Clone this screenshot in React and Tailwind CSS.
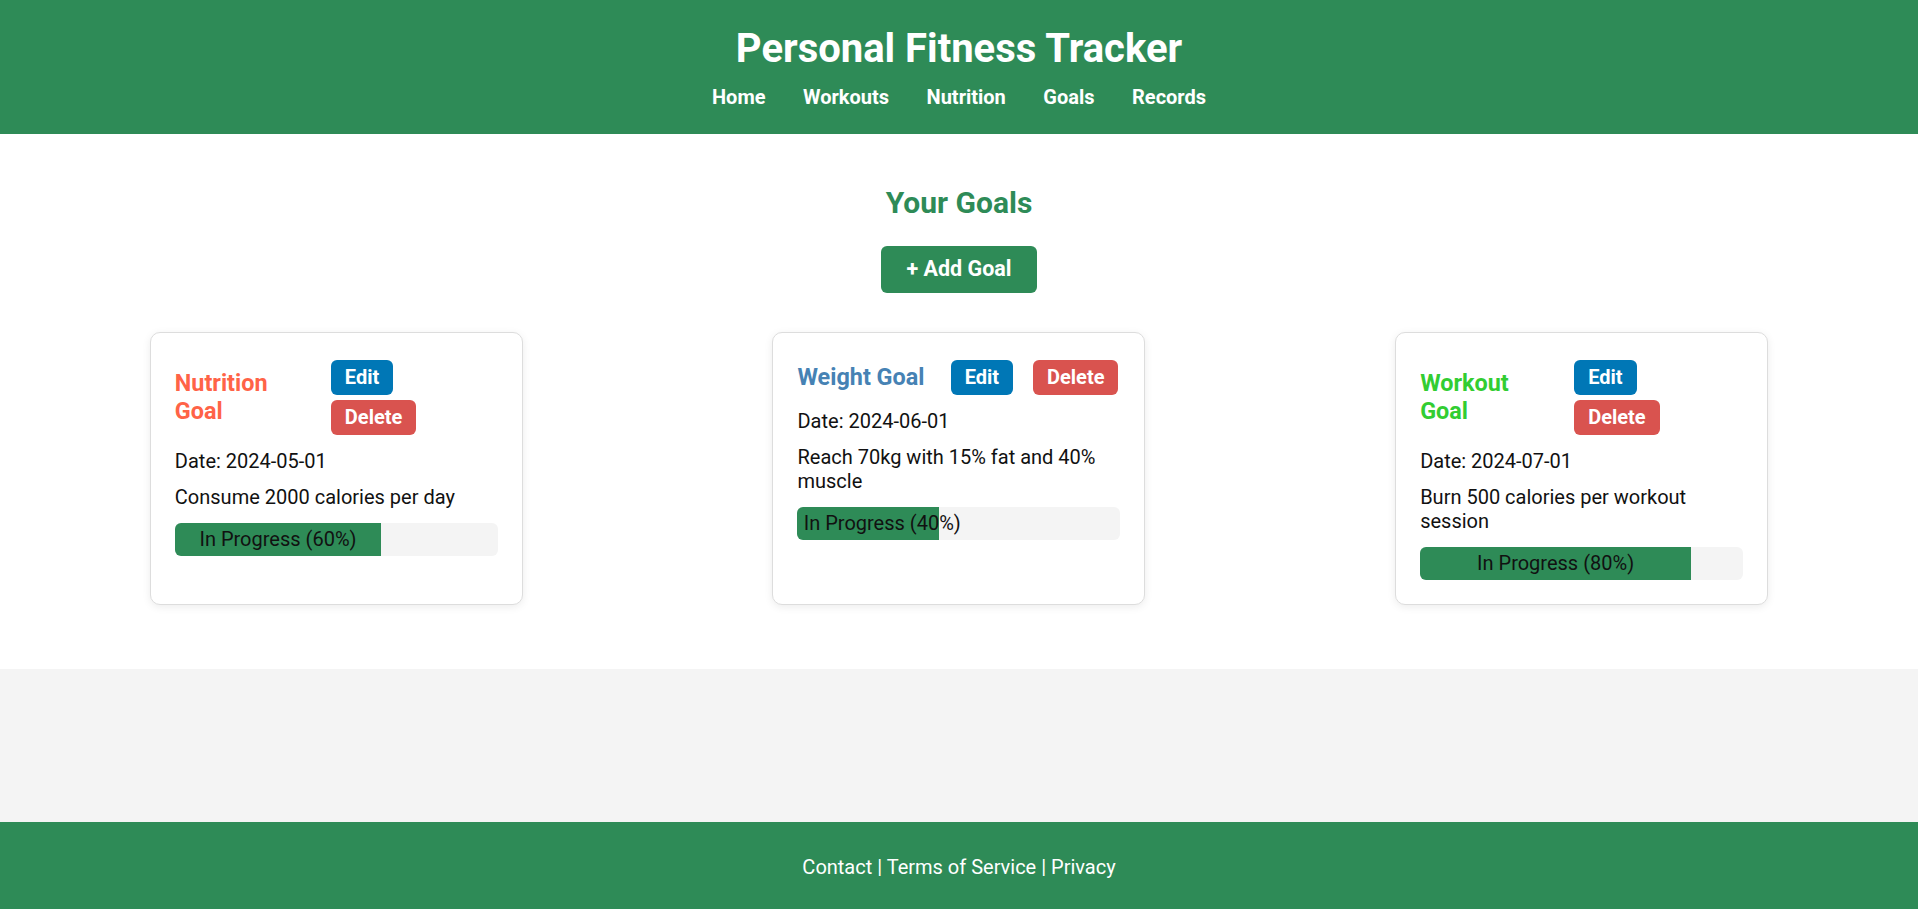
import React from 'react';

const goals = [
  {
    title: 'Nutrition Goal',
    color: 'text-[#ff6347]',
    date: '2024-05-01',
    text: 'Consume 2000 calories per day',
    progress: 60,
    stacked: true,
    titleWidth: 'w-[156px]',
  },
  {
    title: 'Weight Goal',
    color: 'text-[#4682b4]',
    date: '2024-06-01',
    text: 'Reach 70kg with 15% fat and 40% muscle',
    progress: 40,
    stacked: false,
  },
  {
    title: 'Workout Goal',
    color: 'text-[#32cd32]',
    date: '2024-07-01',
    text: 'Burn 500 calories per workout session',
    progress: 80,
    stacked: true,
    titleWidth: 'w-[154px]',
  },
];

const EditButton = () => (
  <button className="h-[35px] px-[14px] rounded-[6px] bg-[#0077b6] text-white text-[20px] font-bold leading-[35px]">
    Edit
  </button>
);

const DeleteButton = () => (
  <button className="h-[35px] px-[14px] rounded-[6px] bg-[#d9534f] text-white text-[20px] font-bold leading-[35px]">
    Delete
  </button>
);

const GoalCard = ({ goal }) => {
  return (
    <div className="w-[373px] bg-white border border-[#dddddd] rounded-[10px] shadow-[0_2px_8px_rgba(0,0,0,0.08)] px-[24px] pt-[27px] pb-[24px]">
      {goal.stacked ? (
        <div className="flex items-center">
          <div className={`${goal.titleWidth} shrink-0`}>
            <h3 className={`max-w-[120px] m-0 text-[23.4px] font-bold leading-[28px] ${goal.color}`}>
              {goal.title}
            </h3>
          </div>
          <div className="flex flex-col items-start gap-[5px]">
            <EditButton />
            <DeleteButton />
          </div>
        </div>
      ) : (
        <div className="flex items-center justify-between">
          <h3 className={`m-0 text-[23.4px] font-bold leading-[28px] ${goal.color}`}>{goal.title}</h3>
          <div className="flex items-center gap-[20px] pr-[2px]">
            <EditButton />
            <DeleteButton />
          </div>
        </div>
      )}

      <p className="mt-[15.5px] text-[20px] leading-[23.4px] text-[#111]">Date: {goal.date}</p>
      <p className="mt-[12.5px] text-[20px] leading-[23.4px] text-[#111]">{goal.text}</p>

      <div className="mt-[13.5px] h-[33px] rounded-[6px] bg-[#f4f4f4]">
        <div
          className="h-[33px] px-[6.25px] rounded-l-[6px] bg-[#2e8b57] text-center whitespace-nowrap text-[20px] leading-[33px] text-[#111]"
          style={{ width: `calc(${goal.progress}% + 12.5px)` }}
        >
          In Progress ({goal.progress}%)
        </div>
      </div>
    </div>
  );
};

export default function App() {
  return (
    <div className="min-h-[909px] flex flex-col bg-[#f4f4f4] font-['Roboto',_'Liberation_Sans',_sans-serif]">
      <header className="bg-[#2e8b57] text-white text-center pt-[25px] pb-[25px]">
        <h1 className="m-0 text-[40px] font-bold leading-[47px]">Personal Fitness Tracker</h1>
        <nav className="mt-[13.5px]">
          <ul className="flex justify-center gap-[37.5px] text-[20px] font-bold leading-[23.4px]">
            <li><a href="#">Home</a></li>
            <li><a href="#">Workouts</a></li>
            <li><a href="#">Nutrition</a></li>
            <li><a href="#">Goals</a></li>
            <li><a href="#">Records</a></li>
          </ul>
        </nav>
      </header>

      <main className="bg-white pt-[51.5px] pb-[64px] px-[25px]">
        <h2 className="m-0 text-center text-[30px] font-bold leading-[35px] text-[#2e8b57]">Your Goals</h2>
        <div className="flex justify-center mt-[25.5px]">
          <button className="h-[47px] px-[25px] rounded-[6px] bg-[#2e8b57] text-white text-[21.5px] font-bold">
            + Add Goal
          </button>
        </div>
        <div className="flex justify-around items-stretch mt-[39px]">
          {goals.map((goal) => (
            <GoalCard key={goal.title} goal={goal} />
          ))}
        </div>
      </main>

      <div className="flex-1" />

      <footer className="h-[87px] bg-[#2e8b57] text-white text-center pt-[34px]">
        <p className="text-[20px] leading-[23.4px]">Contact | Terms of Service | Privacy</p>
      </footer>
    </div>
  );
}
